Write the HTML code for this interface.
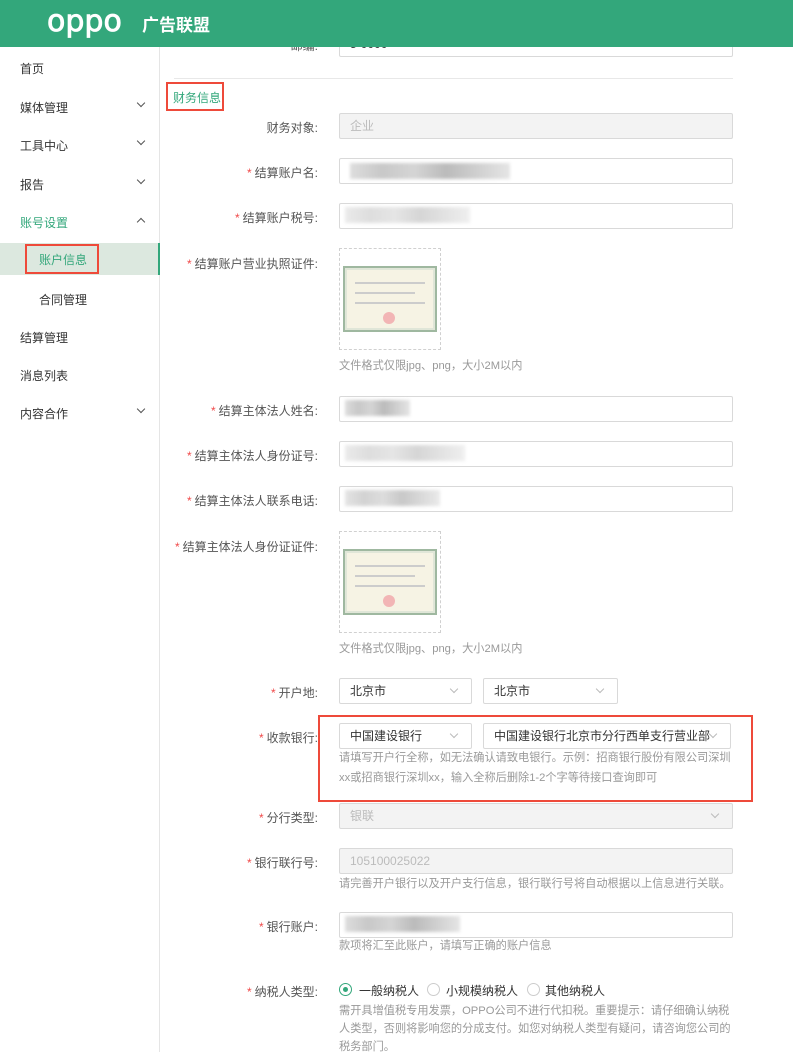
<!DOCTYPE html>
<html><head><meta charset="utf-8"><style>
*{box-sizing:border-box;margin:0;padding:0}
body{width:793px;height:1052px;overflow:hidden;background:#fff;font-family:"Liberation Sans","Noto Sans CJK SC",sans-serif;font-size:12px;color:#333;position:relative}
.a{position:absolute}
.hdr{left:0;top:0;width:793px;height:47px;background:#33a77b;z-index:5}
.side{left:0;top:47px;width:160px;height:1005px;border-right:1px solid #e5e5e5}
.si{position:absolute;left:20px;font-size:12px;color:#333}
.chev{position:absolute;left:138px;width:6px;height:6px;border-right:1.3px solid #555;border-bottom:1.3px solid #555;transform:rotate(45deg)}
.lab{position:absolute;right:475px;text-align:right;white-space:nowrap;color:#555}
.lab i{color:#f04a4a;font-style:normal;margin-right:3px}
.inp{position:absolute;left:339px;width:394px;height:26px;border:1px solid #d9d9d9;border-radius:2px;background:#fff;padding-left:10px;line-height:24px}
.dis{background:#f3f3f3;color:#bbb}
.hint{position:absolute;left:339px;color:#999;font-size:11.2px;line-height:20px}
.blur{position:absolute;height:16px;background:linear-gradient(90deg,#ddd,#c8c8c8,#d5d5d5,#bbb,#d0d0d0,#e5e5e5);filter:blur(1.5px)}
.sel{position:absolute;height:26px;border:1px solid #d9d9d9;border-radius:2px;padding-left:10px;line-height:24px;color:#333}
.sel:after{content:"";position:absolute;right:14px;top:7px;width:5px;height:5px;border-right:1px solid #bbb;border-bottom:1px solid #bbb;transform:rotate(45deg)}
.up{position:absolute;left:339px;width:102px;height:102px;border:1px dashed #d0d0d0}
.cert{position:absolute;left:3px;top:17px;width:94px;height:66px;background:#f6f3e4;border:2px solid #9fb8a0;box-shadow:inset 0 0 0 2px #e0e6d8}
.cert b{position:absolute;left:38px;top:44px;width:12px;height:12px;border-radius:50%;background:#f2b5b5}
.cert s{position:absolute;left:10px;height:2px;background:#ccc}
.radio{position:absolute;width:13px;height:13px;border:1px solid #ccc;border-radius:50%}
</style></head><body>
<div class="a hdr">
 <div class="a" style="left:47px;top:4px;color:#fff;font-size:30px;-webkit-text-stroke:0.8px #fff;letter-spacing:0px;font-family:'DejaVu Sans',sans-serif">oppo</div>
 <div class="a" style="left:142px;top:11px;color:#fff;font-size:17px;font-weight:bold">广告联盟</div>
</div>
<div class="a side">
 <div class="si" style="top:13px">首页</div>
 <div class="si" style="top:52px">媒体管理</div><div class="chev" style="top:53px"></div>
 <div class="si" style="top:90px">工具中心</div><div class="chev" style="top:91px"></div>
 <div class="si" style="top:129px">报告</div><div class="chev" style="top:130px"></div>
 <div class="si" style="top:167px;color:#33a77b">账号设置</div><div class="chev" style="top:172px;transform:rotate(225deg)"></div>
 <div class="a" style="left:0;top:196px;width:160px;height:32px;background:#dce8df;border-right:2px solid #33a77b"></div>
 <div class="a" style="left:25px;top:197px;width:74px;height:30px;border:2px solid #ee4a3a"></div>
 <div class="si" style="left:39px;top:204px;color:#33a77b">账户信息</div>
 <div class="si" style="left:39px;top:244px">合同管理</div>
 <div class="si" style="top:282px">结算管理</div>
 <div class="si" style="top:320px">消息列表</div>
 <div class="si" style="top:358px">内容合作</div><div class="chev" style="top:359px"></div>
</div>

<div class="lab" style="top:37px;color:#555">邮编:</div>
<div class="inp" style="top:31px;height:26px"><span style="color:#333">5·0000</span></div>
<div class="a" style="left:174px;top:78px;width:559px;height:1px;background:#e8e8e8"></div>
<div class="a" style="left:166px;top:82px;width:58px;height:29px;border:2px solid #ee4a3a"></div>
<div class="a" style="left:173px;top:89px;color:#33a77b">财务信息</div>

<div class="lab" style="top:119px">财务对象:</div>
<div class="inp dis" style="top:113px">企业</div>
<div class="lab" style="top:164px"><i>*</i>结算账户名:</div>
<div class="inp" style="top:158px"></div><div class="blur" style="left:350px;top:163px;width:160px"></div>
<div class="lab" style="top:209px"><i>*</i>结算账户税号:</div>
<div class="inp" style="top:203px"></div><div class="blur" style="left:345px;top:207px;width:125px;opacity:.6"></div>
<div class="lab" style="top:255px"><i>*</i>结算账户营业执照证件:</div>
<div class="up" style="top:248px"><div class="cert"><s style="top:14px;width:70px"></s><s style="top:24px;width:60px"></s><s style="top:34px;width:70px"></s><b></b></div></div>
<div class="hint" style="top:356px">文件格式仅限jpg、png，大小2M以内</div>

<div class="lab" style="top:402px"><i>*</i>结算主体法人姓名:</div>
<div class="inp" style="top:396px"></div><div class="blur" style="left:345px;top:400px;width:65px"></div>
<div class="lab" style="top:447px"><i>*</i>结算主体法人身份证号:</div>
<div class="inp" style="top:441px"></div><div class="blur" style="left:345px;top:445px;width:120px;opacity:.6"></div>
<div class="lab" style="top:492px"><i>*</i>结算主体法人联系电话:</div>
<div class="inp" style="top:486px"></div><div class="blur" style="left:345px;top:490px;width:95px;opacity:.8"></div>
<div class="lab" style="top:538px"><i>*</i>结算主体法人身份证证件:</div>
<div class="up" style="top:531px"><div class="cert"><s style="top:14px;width:70px"></s><s style="top:24px;width:60px"></s><s style="top:34px;width:70px"></s><b></b></div></div>
<div class="hint" style="top:639px">文件格式仅限jpg、png，大小2M以内</div>

<div class="lab" style="top:684px"><i>*</i>开户地:</div>
<div class="sel" style="left:339px;top:678px;width:133px">北京市</div>
<div class="sel" style="left:483px;top:678px;width:135px">北京市</div>
<div class="a" style="left:318px;top:715px;width:435px;height:87px;border:2px solid #ee4a3a"></div>
<div class="lab" style="top:729px"><i>*</i>收款银行:</div>
<div class="sel" style="left:339px;top:723px;width:133px">中国建设银行</div>
<div class="sel" style="left:483px;top:723px;width:248px">中国建设银行北京市分行西单支行营业部</div>
<div class="hint" style="top:748px;width:402px">请填写开户行全称，如无法确认请致电银行。示例：招商银行股份有限公司深圳xx或招商银行深圳xx，输入全称后删除1-2个字等待接口查询即可</div>

<div class="lab" style="top:809px"><i>*</i>分行类型:</div>
<div class="sel dis" style="left:339px;top:803px;width:394px;color:#bbb">银联</div>
<div class="lab" style="top:854px"><i>*</i>银行联行号:</div>
<div class="inp dis" style="top:848px">105100025022</div>
<div class="hint" style="top:874px">请完善开户银行以及开户支行信息，银行联行号将自动根据以上信息进行关联。</div>
<div class="lab" style="top:918px"><i>*</i>银行账户:</div>
<div class="inp" style="top:912px"></div><div class="blur" style="left:345px;top:916px;width:115px"></div>
<div class="hint" style="top:936px">款项将汇至此账户，请填写正确的账户信息</div>

<div class="lab" style="top:983px"><i>*</i>纳税人类型:</div>
<div class="radio" style="left:339px;top:983px;border-color:#33a77b"><div class="a" style="left:3px;top:3px;width:5px;height:5px;border-radius:50%;background:#33a77b"></div></div>
<div class="a" style="left:359px;top:982px">一般纳税人</div>
<div class="radio" style="left:427px;top:983px"></div>
<div class="a" style="left:446px;top:982px">小规模纳税人</div>
<div class="radio" style="left:527px;top:983px"></div>
<div class="a" style="left:545px;top:982px">其他纳税人</div>
<div class="hint" style="top:1002px;width:395px;line-height:18px">需开具增值税专用发票，OPPO公司不进行代扣税。重要提示：请仔细确认纳税人类型，否则将影响您的分成支付。如您对纳税人类型有疑问，请咨询您公司的税务部门。</div>
</body></html>
